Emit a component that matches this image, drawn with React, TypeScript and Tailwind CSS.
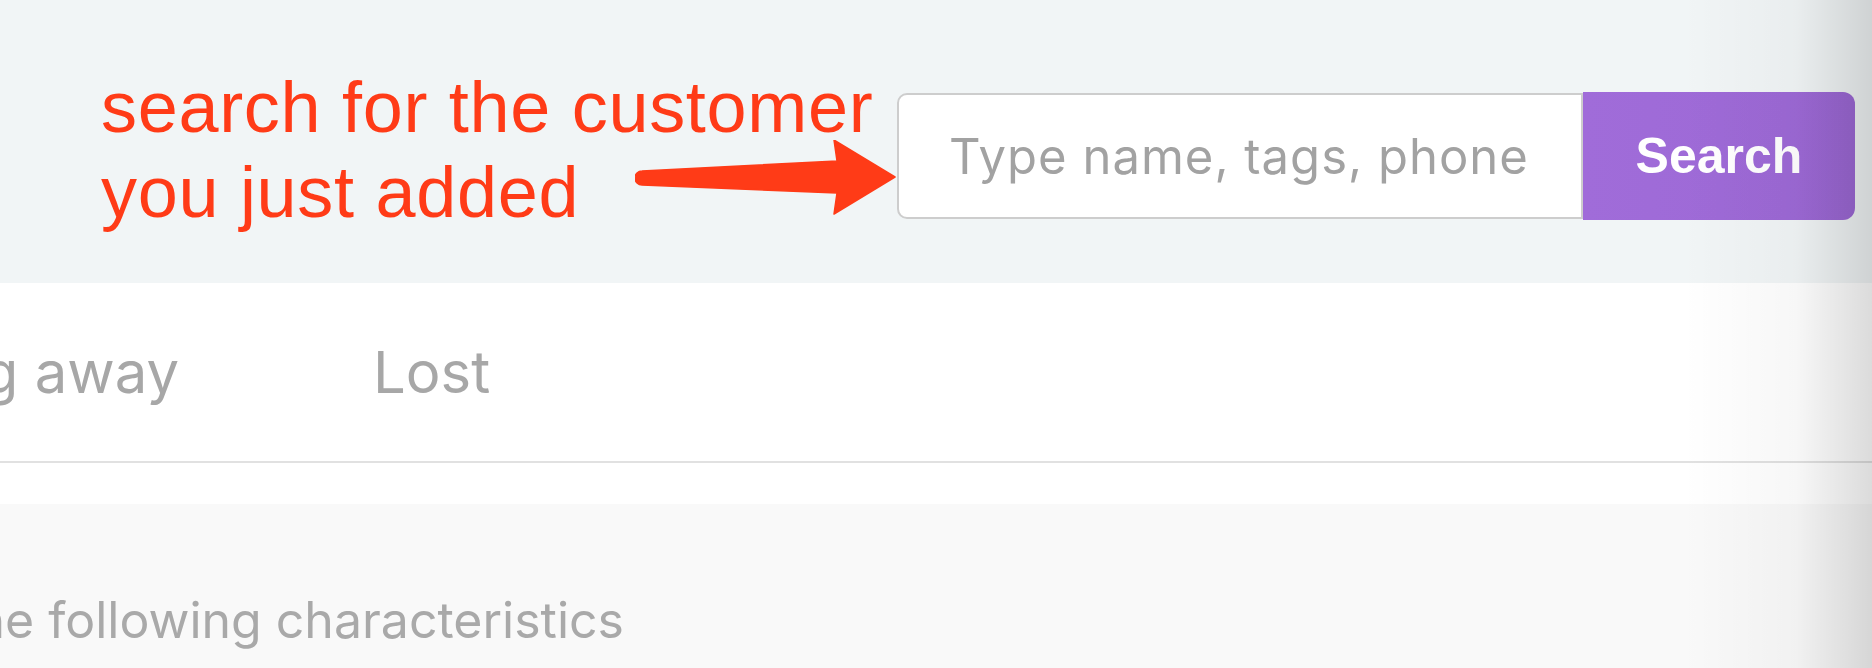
import React from "react";

export default function App() {
  return (
    <div className="relative w-[1872px] h-[668px] overflow-hidden bg-white">
      {/* Header */}
      <div className="flex h-[283px] bg-[#f1f5f6]">
        <div className="ml-[101px] mt-[65px] w-[796px] font-['Liberation_Sans',Arial,sans-serif] text-[72px] leading-[85px] tracking-[0.7px] text-[#ff3b17] whitespace-nowrap">
          <div>search for the customer</div>
          <div className="flex items-start">
            <span>you just added</span>
            <svg
              className="ml-auto -mt-[10px]"
              width="262"
              height="76"
              viewBox="0 0 262 76"
            >
              <path
                d="M7 31 L202 21 L199 0 L260 37 L199 74 L202 53 L7 45 A7 7 0 0 1 7 31 Z"
                fill="#ff3b17"
                stroke="#ff3b17"
                strokeWidth="1.5"
                strokeLinejoin="round"
              />
            </svg>
          </div>
        </div>
        <div className="mt-[93px] flex">
          <input
            className="w-[686px] h-[126px] border-2 border-[#cdcdcd] rounded-l-[10px] bg-white pl-[50px] font-['Inter',sans-serif] text-[49px] tracking-[1px] text-[#444] placeholder:text-[#a2a2a2] outline-none"
            placeholder="Type name, tags, phone"
          />
          <button className="-mt-[1px] w-[272px] h-[128px] rounded-r-[12px] bg-linear-to-r from-[#a06cd9] to-[#9c68d5] text-white font-bold text-[50px] font-['Liberation_Sans',Arial,sans-serif]">
            Search
          </button>
        </div>
      </div>

      {/* Tabs */}
      <div className="flex h-[180px] items-center border-b-2 border-[#e1e1e1] font-['Inter',sans-serif] text-[58px] text-[#a7a7a7] whitespace-nowrap">
        <div className="flex w-[179px] justify-end overflow-hidden">
          <span>Slipping away</span>
        </div>
        <span className="ml-[194px]">Lost</span>
      </div>

      <div className="h-[41px]" />

      {/* Filter area */}
      <div className="h-[164px] bg-[#f9f9f9] pt-[86px] font-['Inter',sans-serif] text-[50px] leading-[60px] text-[#a9a9a9] whitespace-nowrap">
        <div className="flex w-[624px] justify-end overflow-hidden">
          <span>Customers with the following characteristics</span>
        </div>
      </div>

      {/* right-edge shading */}
      <div className="pointer-events-none absolute inset-y-0 right-0 w-[190px] bg-linear-to-r from-transparent via-[rgba(0,0,0,0.03)] via-60% to-[rgba(0,0,0,0.14)]" />
    </div>
  );
}
